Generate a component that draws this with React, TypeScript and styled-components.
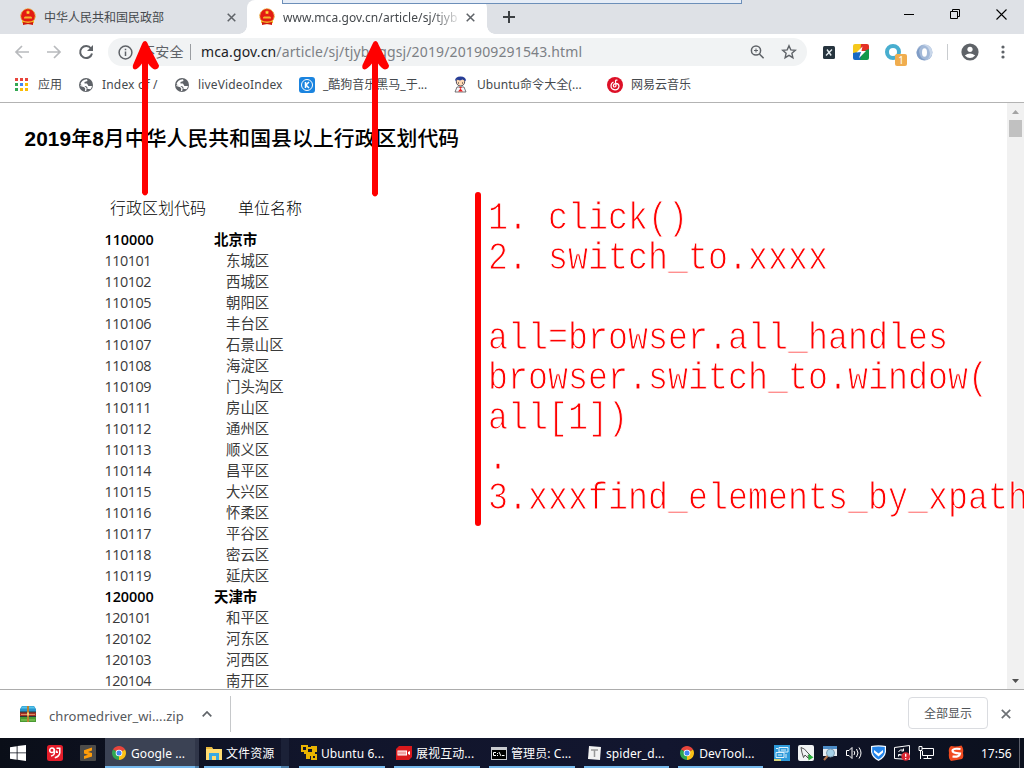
import React from "react";
import styled, { createGlobalStyle } from "styled-components";

const ui = `"Noto Sans", "Noto Sans CJK SC", sans-serif`;

const GlobalStyle = createGlobalStyle`
  html, body { margin: 0; padding: 0; overflow: hidden; background: #fff; }
  * { box-sizing: border-box; }
  svg { display: block; flex: none; }
`;

const Desktop = styled.div`
  position: relative;
  width: 1024px;
  height: 768px;
  overflow: hidden;
  display: flex;
  flex-direction: column;
  font-family: ${ui};
  background: #fff;
`;

/* tab strip */
const TabStrip = styled.div`
  display: flex;
  flex: none;
  height: 34px;
  background: #dee1e6;
`;

const Tab = styled.div<{ $active?: boolean }>`
  position: relative;
  display: flex;
  align-items: center;
  width: ${(p) => (p.$active ? 240 : 247)}px;
  height: 34px;
  padding-left: ${(p) => (p.$active ? 12 : 20)}px;
  background: ${(p) => (p.$active ? "#fff" : "transparent")};
  border-radius: 8px 8px 0 0;
  color: #45494d;
  font-size: 12px;
  &::before, &::after {
    content: "";
    display: ${(p) => (p.$active ? "block" : "none")};
    position: absolute;
    bottom: 0;
    width: 8px;
    height: 8px;
  }
  &::before { left: -8px; background: radial-gradient(circle at 0 0, #dee1e6 7.5px, #fff 8px); }
  &::after { right: -8px; background: radial-gradient(circle at 100% 0, #dee1e6 7.5px, #fff 8px); }
`;

const TabTitle = styled.span<{ $fade?: boolean }>`
  width: 178px;
  margin: 0 5px 0 8px;
  padding-top: 1px;
  line-height: 18px;
  letter-spacing: ${(p) => (p.$fade ? 0.07 : 0)}px;
  white-space: nowrap;
  mask-image: ${(p) => (p.$fade ? "linear-gradient(90deg, #000 148px, transparent 180px)" : "none")};
`;

const NewTab = styled.div`
  padding: 11px 0 0 16px;
  flex: 1;
`;

const WindowButtons = styled.div`
  display: flex;
  gap: 36px;
  padding: 9px 17px 0 0;
`;

const SharedEdge = styled.div`
  position: absolute;
  top: 0;
  left: 282px;
  width: 460px;
  height: 4px;
  background: #e6edf7;
  border: 1px solid #6c8fb9;
  border-top: 0;
`;

/* toolbar */
const Toolbar = styled.div`
  display: flex;
  flex: none;
  align-items: center;
  height: 36px;
  padding-left: 14px;
`;

const Nav = styled.div`
  display: flex;
  gap: 16px;
  width: 94px;
`;

const Omnibox = styled.div`
  display: flex;
  align-items: center;
  width: 699px;
  height: 28px;
  padding-left: 10px;
  border-radius: 14px;
  background: #f1f3f4;
  color: #5f6368;
  font-size: 14px;
`;

const Security = styled.span`
  width: 50px;
  margin-left: 8px;
  border-right: 1px solid #9a9da1;
  height: 16px;
  line-height: 15px;
  letter-spacing: 0.2px;
  white-space: nowrap;
`;

const Url = styled.span`
  flex: 1;
  margin-left: 10px;
  color: #7c8085;
  font-size: 14px;
  line-height: 20px;
  letter-spacing: 0.14px;
  white-space: nowrap;
  b { font-weight: 400; color: #202124; }
`;

const OmniIcons = styled.div`
  display: flex;
  gap: 16px;
  padding-right: 10px;
`;

const Extensions = styled.div`
  display: flex;
  align-items: center;
  padding-left: 13px;
`;

const BadgeHost = styled.div`
  position: relative;
  margin-right: 14px;
`;

const Badge = styled.span`
  position: absolute;
  left: 10px;
  top: 10px;
  width: 12px;
  height: 12px;
  border-radius: 2px;
  background: #f0ad4e;
  color: #fff;
  font: 10px/12px ${ui};
  text-align: center;
`;

const Gap = styled.span<{ $w: number }>`
  flex: none;
  width: ${(p) => p.$w}px;
`;

const Divider = styled.span`
  width: 1px;
  height: 16px;
  background: #c9cccf;
`;

const Bookmarks = styled.div`
  display: flex;
  flex: none;
  align-items: center;
  height: 33px;
  padding: 0 0 3px 14px;
  border-bottom: 1px solid #b3b3b3;
`;

const Bookmark = styled.div<{ $w: number; $gap: number; $ls?: number }>`
  display: flex;
  align-items: center;
  width: ${(p) => p.$w}px;
  gap: ${(p) => p.$gap}px;
  font-size: 12px;
  line-height: 18px;
  color: #45494d;
  white-space: nowrap;
  letter-spacing: ${(p) => p.$ls || 0}px;
`;

/* page */
const Viewport = styled.div`
  display: flex;
  flex: none;
  height: 587px;
  overflow: hidden;
  border-bottom: 1px solid #acacac;
`;

const Page = styled.main`
  flex: 1;
  color: #000;
`;

const Title = styled.h1`
  margin: 21px 0 0 24.5px;
  height: 30px;
  font: 700 20.8px/30px "Liberation Sans", "Noto Sans CJK SC", sans-serif;
  letter-spacing: 0.11px;
  white-space: nowrap;
  span { font-weight: 500; }
`;

const TableHead = styled.div`
  display: flex;
  margin: 40px 0 0 110px;
  height: 35px;
  font: 300 16px/26px "Noto Sans CJK SC", sans-serif;
  span { width: 128px; }
`;

const Row = styled.div<{ $bold: boolean }>`
  display: flex;
  height: 21px;
  margin-left: 104.5px;
  font: ${(p) => (p.$bold ? 600 : 400)} 14.4px/22px "Open Sans", "Noto Sans CJK SC", sans-serif;
  color: ${(p) => (p.$bold ? "#000" : "#3a3a3a")};
`;

const Code = styled.span<{ $bold: boolean }>`
  width: ${(p) => (p.$bold ? 109.5 : 121.5)}px;
  letter-spacing: ${(p) => (p.$bold ? -0.05 : -0.5)}px;
`;

const Scrollbar = styled.div`
  display: flex;
  flex-direction: column;
  justify-content: space-between;
  align-items: center;
  width: 17px;
  padding: 7px 0 6px;
  background: #f1f1f1;
`;

const ThumbArea = styled.div`
  flex: 1;
  padding-top: 6px;
`;

const Thumb = styled.div`
  width: 13px;
  height: 17px;
  background: #c1c1c1;
`;

/* download shelf */
const Shelf = styled.div`
  display: flex;
  flex: none;
  align-items: center;
  height: 48px;
`;

const Download = styled.div`
  display: flex;
  align-items: center;
  width: 231px;
  height: 36px;
  padding-left: 20px;
  border-right: 1px solid #c6c8ca;
  color: #55585c;
  font-size: 13px;
`;

const FileName = styled.span`
  width: 153px;
  margin-left: 13px;
  padding-top: 4px;
  letter-spacing: 0.06px;
  white-space: nowrap;
`;

const ShowAll = styled.button`
  width: 80px;
  height: 32px;
  margin: -2px 13px 0 677px;
  padding: 2px 0 0;
  border: 1px solid #dadce0;
  border-radius: 4px;
  background: #fff;
  color: #505357;
  font: 12px/18px ${ui};
`;

/* taskbar */
const Taskbar = styled.div`
  display: flex;
  flex: none;
  height: 30px;
  background: linear-gradient(90deg, #0a0e18, #11152b 30%, #12162f 65%, #0b101d);
  color: #fff;
`;

const Launchers = styled.div`
  display: flex;
  align-items: center;
  width: 105px;
  padding-left: 10px;
`;

const Task = styled.div<{ $w: number; $mr: number; $active?: boolean }>`
  display: flex;
  align-items: center;
  gap: ${(p) => (p.$active ? 5 : 4)}px;
  flex: none;
  width: ${(p) => p.$w}px;
  margin-right: ${(p) => p.$mr}px;
  padding: 2px 0 0 ${(p) => (p.$active ? 7 : 2)}px;
  border-bottom: 2px solid #76b9ed;
  background: ${(p) => (p.$active ? "#3b4254" : "transparent")};
  font-size: 12px;
  white-space: nowrap;
  letter-spacing: 0.08px;
`;

const Stack = styled.div<{ $w: number; $mr: number; $bg: string }>`
  width: ${(p) => p.$w}px;
  margin-right: ${(p) => p.$mr}px;
  background: ${(p) => p.$bg};
  border-bottom: 2px solid #4e7fa9;
`;

const Tray = styled.div`
  display: flex;
  align-items: center;
  gap: 8px;
  width: 256px;
  padding-left: 11px;
`;

const Clock = styled.span`
  margin-left: 9px;
  font-size: 12px;
  white-space: nowrap;
`;

const PeekEdge = styled.div`
  width: 1px;
  height: 30px;
  background: #5d606b;
`;

/* hand-drawn annotations above the page */
const Marks = styled.svg`
  position: absolute;
  left: 0;
  top: 0;
  pointer-events: none;
`;

const Notes = styled.pre`
  position: absolute;
  left: 488px;
  top: 199px;
  margin: 0;
  color: #ff0000;
  font: 38px/40px "Liberation Mono", monospace;
  -webkit-text-stroke: 1px #fff;
  transform: scaleX(0.8772);
  transform-origin: 0 0;
`;

const Emblem = () => (
  <svg width="16" height="18" viewBox="0 0 16 18">
    <circle cx="8" cy="8" r="7.2" fill="#e31b12" stroke="#e6a32c" strokeWidth="1" strokeDasharray="2 .5" />
    <path d="M8 2.200l.7 1.400 1.500.2-1.100 1 .3 1.500L8 5.600l-1.400.7.3-1.500-1.100-1 1.500-.2z" fill="#ffd83b" />
    <path d="M4 9.500l1-1h6l1 1v1H4zM2 12q6 3 12 0v3q-6 2.500-12 0z" fill="#f2b42c" />
    <path d="M3 14l5 1 5-1v3l-5-1-5 1z" fill="#cf160e" />
  </svg>
);

const Cross = ({ size = 9, color = "#5f6368", w = 1.7 }) => (
  <svg width={size} height={size} viewBox="0 0 10 10" stroke={color} strokeWidth={w}>
    <path d="M.8.8l8.400 8.400M9.200.8L.8 9.200" />
  </svg>
);

const Arrow = ({ flip = false }) => (
  <svg width="16" height="16" viewBox="0 0 16 16" fill="none" stroke="#b8babd" strokeWidth="1.700">
    <path d={flip ? "M1 8h13M8 2l6 6-6 6" : "M15 8H2M8 2L2 8l6 6"} />
  </svg>
);

const Globe = () => (
  <svg width="14" height="14" viewBox="0 0 14 14">
    <circle cx="7" cy="7" r="7" fill="#5f6368" />
    <path d="M8 1.300L8.500 3 5.500 4v1.500H8L9.500 8H13q-.3 2-1.500 3.300L10 11H8.500V9.500L7 8H3.500L1.500 6Q2.500 2 8 1.300z" fill="#fff" />
    <path d="M2 8.500l3 .8L6 12.500Q3 12 2 8.500zM9 2l2.500 1.500L10.500 6 8 5l1.500-1.200z" fill="#5f6368" />
    <path d="M1.500 7.500l4 1.200L7 10.500 6.500 13" stroke="#fff" strokeWidth="1.300" fill="none" />
    <path d="M8.500 5.500h3.500l1 2H9.500z" fill="#5f6368" />
  </svg>
);

const Chrome = () => (
  <svg width="14" height="14" viewBox="0 0 14 14">
    <path d="M7 7L.94 3.500A7 7 0 0 1 13.060 3.500z" fill="#e8453c" />
    <path d="M7 7l6.060-3.500A7 7 0 0 1 7 14z" fill="#fbc116" />
    <path d="M7 7v7A7 7 0 0 1 .94 3.500z" fill="#31a752" />
    <circle cx="7" cy="7" r="3.300" fill="#fff" />
    <circle cx="7" cy="7" r="2.500" fill="#4285f4" />
  </svg>
);

const rows: [string, string][] = [
  ["110000", "北京市"], ["110101", "东城区"], ["110102", "西城区"], ["110105", "朝阳区"],
  ["110106", "丰台区"], ["110107", "石景山区"], ["110108", "海淀区"], ["110109", "门头沟区"],
  ["110111", "房山区"], ["110112", "通州区"], ["110113", "顺义区"], ["110114", "昌平区"],
  ["110115", "大兴区"], ["110116", "怀柔区"], ["110117", "平谷区"], ["110118", "密云区"],
  ["110119", "延庆区"], ["120000", "天津市"], ["120101", "和平区"], ["120102", "河东区"],
  ["120103", "河西区"], ["120104", "南开区"],
];

const notes = `1. click()
2. switch_to.xxxx

all=browser.all_handles
browser.switch_to.window(
all[1])
.
3.xxxfind_elements_by_xpath`;

const appDots = ["#e8453c", "#e8453c", "#e8453c", "#34a853", "#4285f4", "#fbbc05", "#34a853", "#fbbc05", "#fbbc05"];

export default function App() {
  return (
    <Desktop>
      <GlobalStyle />
      <TabStrip>
        <Tab>
          <Emblem />
          <TabTitle>中华人民共和国民政部</TabTitle>
          <Cross />
        </Tab>
        <Tab $active>
          <Emblem />
          <TabTitle $fade>www.mca.gov.cn/article/sj/tjyb</TabTitle>
          <Cross />
        </Tab>
        <NewTab>
          <svg width="12" height="12" stroke="#3c4043" strokeWidth="2"><path d="M6 0v12M0 6h12" /></svg>
        </NewTab>
        <WindowButtons>
          <svg width="10" height="11" stroke="#000"><path d="M0 5.500h10" /></svg>
          <svg width="10" height="11" stroke="#000" fill="none"><path d="M.5 2.500h7v7h-7zM2.500 2.500v-2h7v7h-2" /></svg>
          <svg width="11" height="11" stroke="#000" strokeWidth="1.100"><path d="M.5.5l10 10M10.500.5l-10 10" /></svg>
        </WindowButtons>
      </TabStrip>
      <SharedEdge />

      <Toolbar>
        <Nav>
          <Arrow />
          <Arrow flip />
          <svg width="16" height="16" viewBox="0 0 16 16" fill="none" stroke="#5f6368" strokeWidth="2">
            <path d="M13 4.500A6 6 0 1 0 14 9.500" /><path d="M15 1v6H9z" fill="#5f6368" stroke="none" />
          </svg>
        </Nav>
        <Omnibox>
          <svg width="15" height="15" viewBox="0 0 15 15" fill="none" stroke="#5f6368" strokeWidth="1.500">
            <circle cx="7.500" cy="7.500" r="6.400" /><path d="M7.500 6.500v4.500M7.500 3.700v1.600" />
          </svg>
          <Security>不安全</Security>
          <Url><b>mca.gov.cn</b>/article/sj/tjybgggsj/2019/201909291543.html</Url>
          <OmniIcons>
            <svg width="15" height="16" viewBox="0 0 15 16" fill="none" stroke="#5f6368" strokeWidth="1.500">
              <circle cx="6" cy="6.500" r="4.600" /><path d="M9.400 9.900l4.200 4.300" /><path d="M6 4.500v4M4 6.500h4" strokeWidth="1" />
            </svg>
            <svg width="16" height="16" viewBox="0 0 16 16" fill="none" stroke="#5f6368" strokeWidth="1.400">
              <path d="M8 1.800l1.800 4.100 4.500.4-3.400 3 1 4.400L8 11.400l-3.900 2.300 1-4.400-3.400-3 4.500-.4z" />
            </svg>
          </OmniIcons>
        </Omnibox>
        <Extensions>
          <Gap $w={3} />
          <svg width="12" height="13" viewBox="0 0 12 13">
            <rect width="12" height="13" rx="1.500" fill="#26343e" />
            <path d="M4 3.500l4.200 6M9 3.500l-6 6" stroke="#e4ebee" strokeWidth="1.400" />
          </svg>
          <Gap $w={18} />
          <svg width="16" height="16" viewBox="0 0 16 16">
            <path d="M2 0h7L8 7 0 10V2q0-2 2-2z" fill="#f5c81c" /><path d="M8 0h6q2 0 2 2v4L7 9z" fill="#e33026" />
            <path d="M0 9l9-2-1 9H2q-2 0-2-2z" fill="#1769c4" /><path d="M9 8l7-3v9q0 2-2 2H7z" fill="#12984a" />
            <path d="M9.500 2.500L3.500 8.500l4.500-.5L6 14l7-7H8.500z" fill="#fff" />
          </svg>
          <Gap $w={16} />
          <BadgeHost>
            <svg width="17" height="16"><circle cx="8" cy="8" r="6" fill="none" stroke="#48aecf" strokeWidth="4" /></svg>
            <Badge>1</Badge>
          </BadgeHost>
          <svg width="17" height="17" viewBox="0 0 17 17">
            <circle cx="8.500" cy="8.500" r="8" fill="#a3b9d8" />
            <path d="M8 .5Q1 4 4 11q1 4 6 5Q3 17 1 11T8 .5z" fill="#7f9cc6" />
            <path d="M9 16.500q7-3.500 4-10.500Q12 2 7 1q7-1 9 5t-7 10.500z" fill="#c9d7ea" />
            <ellipse cx="8.500" cy="8.500" rx="2.500" ry="4.200" fill="#fff" />
          </svg>
          <Gap $w={14} />
          <Divider />
          <Gap $w={13} />
          <svg width="18" height="18" viewBox="0 0 18 18">
            <circle cx="9" cy="9" r="8.600" fill="#5f6368" /><circle cx="9" cy="6.300" r="2.600" fill="#fff" />
            <path d="M3.800 12.500q5.200-4 10.400 0-5.200 5-10.400 0z" fill="#fff" />
          </svg>
          <Gap $w={21.5} />
          <svg width="4" height="14" fill="#5f6368"><circle cx="2" cy="2" r="1.600" /><circle cx="2" cy="7" r="1.600" /><circle cx="2" cy="12" r="1.600" /></svg>
        </Extensions>
      </Toolbar>

      <Bookmarks>
        <Bookmark $w={65} $gap={10}>
          <svg width="14" height="13">
            {appDots.map((c, i) => <rect key={i} x={1 + (i % 3) * 5} y={Math.floor(i / 3) * 5} width="3" height="3" fill={c} />)}
          </svg>
          应用
        </Bookmark>
        <Bookmark $w={96} $gap={9} $ls={0.18}><Globe />Index of /</Bookmark>
        <Bookmark $w={124} $gap={9} $ls={0.15}><Globe />liveVideoIndex</Bookmark>
        <Bookmark $w={155} $gap={8}>
          <svg width="16" height="16" viewBox="0 0 16 16">
            <rect width="16" height="16" rx="3" fill="#1b84df" /><circle cx="8" cy="8" r="5.500" fill="none" stroke="#fff" />
            <path d="M6.500 5v6M10 5L7 8l3 3" fill="none" stroke="#fff" strokeWidth="1.500" />
          </svg>
          _酷狗音乐黑马_于...
        </Bookmark>
        <Bookmark $w={153} $gap={10} $ls={0.05}>
          <svg width="13" height="17" viewBox="0 0 13 17">
            <circle cx="6.500" cy="5.800" r="4.200" fill="#ffd9b5" stroke="#27243a" strokeWidth=".8" /><path d="M1 5q0-4.500 5.500-4.500T12 5L8.500 3.500 6 4.500 3 3.500z" fill="#263d96" />
            <path d="M4 7h1M8 7h1" stroke="#222" /><path d="M1 16l2-5h7l2 5z" fill="#f5f5fa" stroke="#555" strokeWidth=".8" /><path d="M5 11l1.500 2L8 11M4 15.500l2.500-3 2.500 3z" fill="#e22" />
          </svg>
          Ubuntu命令大全(...
        </Bookmark>
        <Bookmark $w={90} $gap={8}>
          <svg width="16" height="16" viewBox="0 0 16 16" fill="none" stroke="#fff" strokeWidth="1.200">
            <circle cx="8" cy="8" r="8" fill="#dd1027" stroke="none" />
            <path d="M10.500 3.300q-2-.8-2 1L9 8.500q0 1.500-1.300 1.500T6.400 8.200Q6.700 6.500 9 6.300q3 .2 3 3-.5 3.500-4 3.500-4-.3-4-4Q4 6 6.500 5" />
          </svg>
          网易云音乐
        </Bookmark>
      </Bookmarks>

      <Viewport>
        <Page>
          <Title>2019<span>年</span>8<span>月中华人民共和国县以上行政区划代码</span></Title>
          <TableHead><span>行政区划代码</span><span>单位名称</span></TableHead>
          {rows.map(([code, name]) => {
            const bold = code.endsWith("0000");
            return <Row key={code} $bold={bold}><Code $bold={bold}>{code}</Code>{name}</Row>;
          })}
        </Page>
        <Scrollbar>
          <svg width="7" height="4"><path d="M0 4h7L3.500 0z" fill="#a3a3a3" /></svg>
          <ThumbArea><Thumb /></ThumbArea>
          <svg width="7" height="4"><path d="M0 0h7L3.500 4z" fill="#505050" /></svg>
        </Scrollbar>
      </Viewport>

      <Shelf>
        <Download>
          <svg width="16" height="16" viewBox="0 0 16 16">
            <path d="M2 0h12l2 3v3H0V3z" fill="#2795cc" /><path d="M2 .5h12l1 2H1z" fill="#55c3ea" />
            <path d="M0 6h16v5H0z" fill="#a63326" /><path d="M0 10.500h16V16H0z" fill="#4a9b33" />
            <path d="M0 6h16M0 10.500h16" stroke="#26393a" /><path d="M1 14h14" stroke="#8fd05c" /><path d="M1 8.500h14" stroke="#db8b63" /><path d="M7 0h2v16H7z" fill="#b98231" /><path d="M7 6.500h2v3H7z" fill="#f2d479" />
          </svg>
          <FileName>chromedriver_wi....zip</FileName>
          <svg width="10" height="6" fill="none" stroke="#5f6368" strokeWidth="1.700"><path d="M.7 5.300L5 1l4.300 4.300" /></svg>
        </Download>
        <ShowAll>全部显示</ShowAll>
        <Cross size={10} color="#6d7175" />
      </Shelf>

      <Taskbar>
        <Launchers>
          <svg width="16" height="16" fill="#fff"><path d="M0 2.200L6.700 1.200v6.300H0zM7.500 1.100L16 0v7.500H7.500zM0 8.300h6.700v6.400L0 13.800zM7.500 8.300H16V16l-8.500-1.200z" /></svg>
          <Gap $w={21} />
          <svg width="16" height="16" viewBox="0 0 16 16" fill="none" stroke="#fff" strokeWidth="1.500">
            <rect width="16" height="16" rx="2.500" fill="#e41d2a" stroke="none" /><circle cx="5" cy="5.300" r="2.300" /><path d="M7.300 4v3.500q.5 2.500-3.300 3.500M9.500 3.300h3.300v4.500q-.5 3.500-5 5M9.500 5.500v1.700h1.500" />
          </svg>
          <Gap $w={17} />
          <svg width="16" height="16"><rect width="16" height="16" rx="1" fill="#4c4b49" /><path d="M12 2.500v3L8 7l4 1v3.500l-8 2.500v-3l4-1.200-4-1.300V5.200z" fill="#ff9c0a" /></svg>
        </Launchers>
        <Task $w={90} $mr={0} $active><Chrome />Google ...</Task>
        <Stack $w={4} $mr={5} $bg="#303649" />
        <Task $w={77} $mr={0}>
          <svg width="16" height="14"><path d="M0 1h6l1 2h9v11H0z" fill="#ffdc71" /><path d="M0 1h6v2H0z" fill="#e9b93d" /><path d="M3 14V7h10v7h-3v-4H6v4z" fill="#38a9e2" /></svg>
          文件资源
        </Task>
        <Stack $w={8} $mr={10} $bg="#1b2137" />
        <Task $w={86} $mr={9}>
          <svg width="16" height="16" viewBox="0 0 16 16" fill="#e9b300"><path d="M0 0h7v2h3v-1h6v6h-2v2h2v6h-6v-4H9v3H5v-5H3V7H0zM2 2v3h3V2zM7 4v3h4V4zM12 11v2h2v-2z" fillRule="evenodd" /></svg>
          Ubuntu 6...
        </Task>
        <Task $w={86} $mr={9}>
          <svg width="16" height="14" viewBox="0 0 16 14"><path d="M3 0h13v11l-3 3H0V3z" fill="#d9191c" /><path d="M1.500 4.500H11v5H1.500zM12 6l2-1v4l-2-1z" fill="#fff" /><path d="M3 5.500v3M5 5.500v3M7 5.500v3M9 5.500v3" stroke="#d9191c" strokeWidth=".8" /></svg>
          展视互动...
        </Task>
        <Task $w={86} $mr={9}>
          <svg width="16" height="13"><path d="M0 0h16v13H0z" fill="#c9cbd0" /><path d="M1 3h14v9H1z" fill="#000" /><path d="M5 5.500H2.500v3H5M6.500 6v1M6.500 8v1M8 5l2 4M11 8.500h2.500" fill="none" stroke="#fff" /></svg>
          管理员: C...
        </Task>
        <Task $w={85} $mr={9}>
          <svg width="16" height="14"><path d="M3 0l12 1-1 13-12-1z" fill="#f2f2f2" /><path d="M5 4h7M8.500 4v7" stroke="#999" strokeWidth="1.500" /></svg>
          spider_d...
        </Task>
        <Task $w={85} $mr={0}>
          <Chrome />
          <span>&#8202;DevTool...</span>
        </Task>
        <Tray>
          <svg width="16" height="16" viewBox="0 0 16 16"><path d="M0 0h16v16H0z" fill="#2e9ada" /><path d="M5 2.500h9v4.500H5zM2 7.500h8v5H2zM7 5h5M4 10h4M12 9v4M2 3.500h2" fill="none" stroke="#dff2fd" /><path d="M0 14h7v2H0z" fill="#d6d57a" /></svg>
          <svg width="16" height="16" viewBox="0 0 16 16"><rect width="16" height="16" rx="2" fill="#f1f3f4" /><path d="M3 2.500q4 1 6 4.500l4 4-3-.5.5 3L7 10l-1.500 2.500Q3.500 7 3 2.500z" fill="none" stroke="#444" strokeWidth=".9" /><path d="M10.500 9l5 3.300-5 3.300z" fill="#27b33b" /></svg>
          <svg width="16" height="16" viewBox="0 0 16 16"><path d="M1 1h14v10H1z" fill="#e8edf2" /><path d="M1 1h14v3H1z" fill="#4c8cc7" /><circle cx="8.500" cy="8" r="4" fill="#a5d1e9" stroke="#7d9cb1" /><path d="M5.500 11L2 15" stroke="#b2744b" strokeWidth="2" /></svg>
          <svg width="17" height="14" viewBox="0 0 17 14" fill="none" stroke="#fff"><path d="M.5 4.500h2.500l3-3v11l-3-3H.5zM8 5q1.500 2 0 4M10.500 3q3 4 0 8M13 1.500q4 5.500 0 11" /></svg>
          <svg width="15" height="16" viewBox="0 0 15 16"><path d="M0 1q7.500-1.500 15 0v6q-1 6-7.500 9Q1 13 0 7z" fill="#f4faff" /><path d="M1.200 2q6.300-1 12.600 0V7q-1 5-6.300 7.500-5.300-2.500-6.300-7.500z" fill="#2485eb" /><path d="M3 5l4.500 3.500L12 5v2.500L7.500 11.500 3 7.500z" fill="#fff" /></svg>
          <svg width="16" height="16" viewBox="0 0 16 16" fill="none" stroke="#fff"><path d="M.5 2.500l15-2v14l-15-1zM4.500 7q1-3 5-2M9.500 3.500V6H7.500M10 8q-1 3-5 2M4.500 11.500V9.500h2" /><circle cx="11.700" cy="11.500" r="4.300" fill="#dc2630" stroke="none" /><path d="M11.700 8.800v3M11.700 13v1.200" strokeWidth="1.300" /></svg>
          <svg width="16" height="14" viewBox="0 0 16 14" fill="none" stroke="#fff"><path d="M4 2.500h11.500v7H4.500V5M1 .5h3v4H1zM2.500 5v8M9.500 9.500v3M5.500 12.500h8" /></svg>
          <svg width="22" height="16" viewBox="-6 0 22 16"><path d="M3 1Q8 2 13.500 .5 16 4 15 8q1 4-1 6-5 1-11 2Q0 13 1 8 0 3 3 1z" fill="#f14b20" /><path d="M12.500 4Q5 3 4.500 5.500t7.500 3q-.5 4-7.500 3" fill="none" stroke="#fff" strokeWidth="2.200" /></svg>
          <Clock>17:56</Clock>
        </Tray>
        <PeekEdge />
      </Taskbar>

      <Marks width="1024" height="768" fill="#f00">
        <path d="M145 41q-2 0-3 3l-9 21q-1 4 2 4.500 3-.5 7-6V193q3 5 6 0V63.500q4 5.500 7 6 4-.5 4-4l-11-21q-1-3.500-3-3.500z" />
        <path d="M375.500 41q-2 0-3 3l-10 21q-1 4 2 4.500 3-.5 7.500-6V194q3 5 6 0V63.500q4 5.500 7 6 4-.5 4-4l-10.500-21q-1-3.500-3-3.500z" />
        <rect x="475" y="192" width="6" height="334" rx="3" />
      </Marks>
      <Notes>{notes}</Notes>
    </Desktop>
  );
}
